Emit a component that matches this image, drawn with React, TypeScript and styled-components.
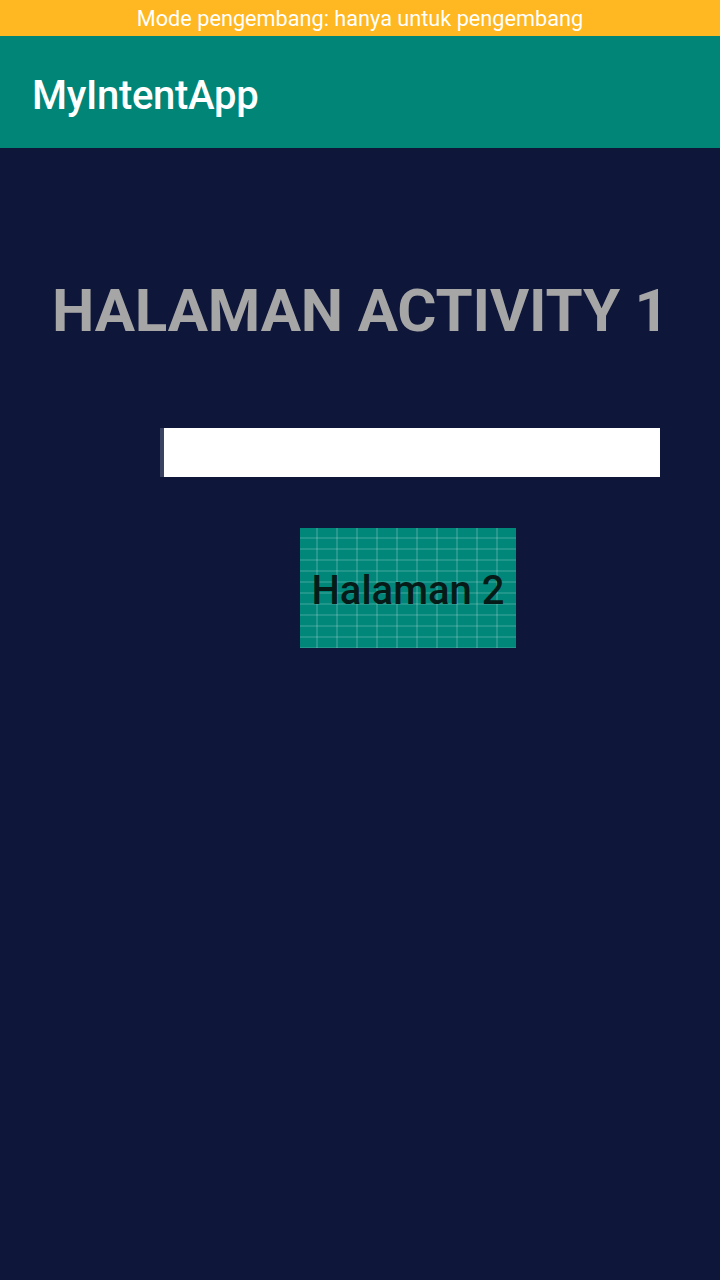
import React from "react";
import styled, { createGlobalStyle } from "styled-components";

const Global = createGlobalStyle`
  html, body { margin: 0; padding: 0; background: #0e1639; }
  body { font-family: Roboto, "Noto Sans", sans-serif; }
`;

const Screen = styled.div`
  width: 720px;
  height: 1280px;
  display: flex;
  flex-direction: column;
  background: #0e1639;
  overflow: hidden;
`;

const StatusBar = styled.div`
  height: 36px;
  background: #ffb722;
  color: #ffffff;
  font-size: 21.7px;
  display: flex;
  align-items: center;
  justify-content: center;
  line-height: 1;
  padding-top: 2px;
  box-sizing: border-box;
`;

const Toolbar = styled.div`
  height: 112px;
  background: #008577;
  display: flex;
  align-items: center;
  padding-left: 32px;
  padding-top: 6px;
  box-sizing: border-box;
`;

const Title = styled.h1`
  margin: 0;
  font-size: 40px;
  font-weight: 500;
  color: #ffffff;
  letter-spacing: -0.3px;
`;

const Content = styled.main`
  flex: 1;
  display: flex;
  flex-direction: column;
  padding-top: 128px;
`;

const Heading = styled.h2`
  margin: 0 0 0 52px;
  font-size: 60px;
  font-weight: 700;
  color: #a6a6a6;
  line-height: 70px;
  letter-spacing: -0.18px;
  white-space: nowrap;
`;

const Input = styled.div`
  margin: 82px 0 0 160px;
  width: 500px;
  height: 49px;
  background: #ffffff;
  border-left: 4px solid transparent;
  border-image: linear-gradient(to right, #3a4262, #8a90a8, #c8ccd8, #ffffff) 1;
  box-sizing: border-box;
`;

const Button = styled.button`
  margin: 51px 0 0 300px;
  width: 216px;
  height: 120px;
  border: none;
  padding: 0;
  background-color: #00877a;
  background-image:
    repeating-linear-gradient(
      to right,
      transparent 0px,
      transparent 16px,
      rgba(255, 255, 255, 0.15) 16px,
      rgba(255, 255, 255, 0.15) 18px,
      transparent 18px,
      transparent 20px
    ),
    repeating-linear-gradient(
      to bottom,
      transparent 0px,
      transparent 9px,
      rgba(255, 255, 255, 0.13) 9px,
      rgba(255, 255, 255, 0.13) 11px
    );
  font-family: Roboto, "Noto Sans", sans-serif;
  font-size: 40px;
  font-weight: 500;
  color: #061a17;
  display: flex;
  align-items: center;
  justify-content: center;
  padding-top: 4px;
  box-sizing: border-box;
  white-space: nowrap;
`;

export default function App() {
  return (
    <>
      <Global />
      <Screen>
        <StatusBar>Mode pengembang: hanya untuk pengembang</StatusBar>
        <Toolbar>
          <Title>MyIntentApp</Title>
        </Toolbar>
        <Content>
          <Heading>HALAMAN ACTIVITY 1</Heading>
          <Input />
          <Button>Halaman 2</Button>
        </Content>
      </Screen>
    </>
  );
}
